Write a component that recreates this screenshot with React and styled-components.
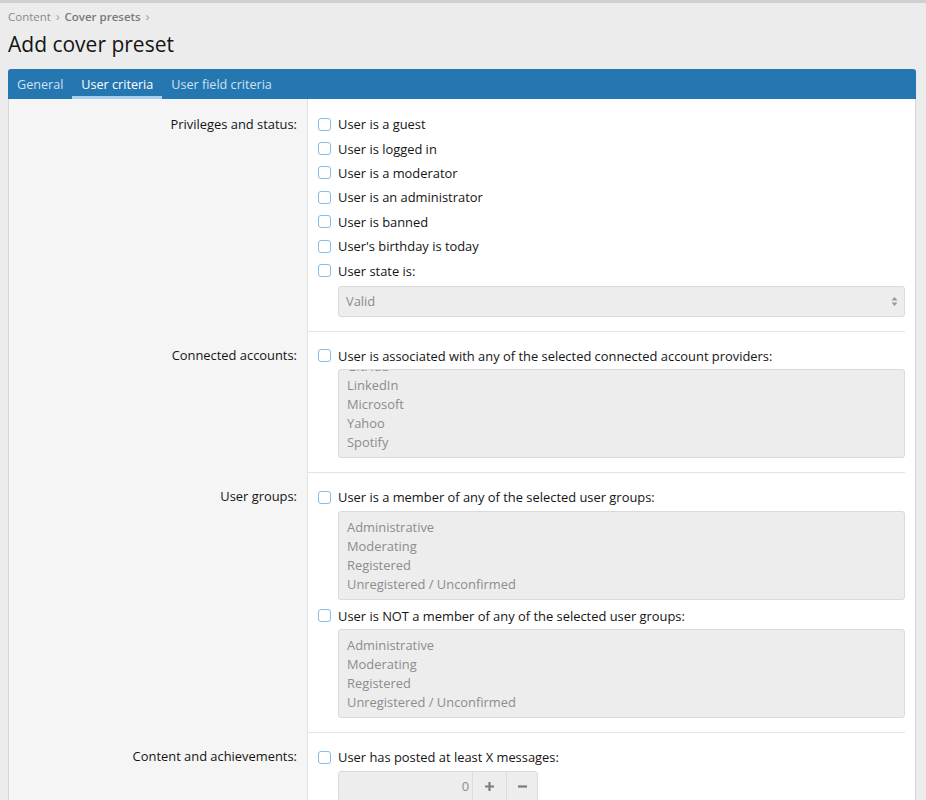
import React from 'react'
import styled, { createGlobalStyle } from 'styled-components'

const GlobalStyle = createGlobalStyle`
  html, body {
    margin: 0;
    padding: 0;
    background: #ececec;
    font-family: "Open Sans", "Noto Sans", sans-serif;
    color: #141414;
  }
  * { box-sizing: border-box; }
`

const Page = styled.div`
  min-height: 800px;
  padding: 0 10px 0 8px;
  border-top: 3px solid #cfcfcf;
  overflow: hidden;
`

const Crumbs = styled.div`
  display: flex;
  align-items: center;
  gap: 5px;
  margin-top: 5px;
  height: 16px;
  font-size: 11.5px;
  color: #8a8a8a;
`

const Crumb = styled.span`
  font-weight: ${(props) => (props.strong ? 600 : 400)};
  color: ${(props) => (props.strong ? '#7a7a7a' : '#8a8a8a')};
`

const Chevron = styled.span`
  font-size: 12px;
  color: #9a9a9a;
`

const Title = styled.h1`
  margin: 6px 0 11px;
  font-size: 21px;
  line-height: 28px;
  font-weight: 400;
  color: #141414;
`

const Panel = styled.div`
  border: 1px solid #d6d6d6;
  border-top: none;
  border-radius: 3px 3px 0 0;
  background: #fff;
`

const TabBar = styled.div`
  display: flex;
  height: 30px;
  background: #2577b1;
  border-radius: 3px 3px 0 0;
  margin: 0 -1px;
`

const Tab = styled.div`
  display: flex;
  align-items: center;
  padding: 3px 9px 0;
  font-size: 12.6px;
  color: ${(props) => (props.active ? '#ffffff' : '#cfe2f2')};
  border-bottom: 3px solid ${(props) => (props.active ? '#a9d0ee' : 'transparent')};
`

const Row = styled.div`
  display: grid;
  grid-template-columns: 299px 1fr;
`

const Label = styled.div`
  background: #f5f5f5;
  border-right: 1px solid #e2e2e2;
  padding: ${(props) => (props.first ? '13px' : '12px')} 10px 0 0;
  text-align: right;
  font-size: 12.9px;
  line-height: 24.4px;
  color: #141414;
`

const Body = styled.div`
  margin-right: 10px;
  padding: ${(props) => (props.first ? '13px' : '12px')} 0 14px 10px;
  border-top: ${(props) => (props.first ? 'none' : '1px solid #e4e4e4')};
`

const Option = styled.label`
  display: flex;
  align-items: center;
  gap: 7px;
  height: 24.4px;
  font-size: 12.9px;
  color: #141414;
  margin-top: ${(props) => props.gap || 0}px;
`

const Box = styled.span`
  width: 13px;
  height: 13px;
  border: 1px solid #86bde8;
  border-radius: 3px;
  background: #fff;
  flex: none;
`

const Select = styled.div`
  display: flex;
  align-items: center;
  justify-content: space-between;
  margin: 3px 0 0 20px;
  height: 31px;
  padding: 0 6px 0 7px;
  background: #ededed;
  border: 1px solid #dadada;
  border-radius: 3px;
  font-size: 12.9px;
  color: #8c8c8c;
`

const ListBox = styled.div`
  margin: 1px 0 0 20px;
  height: 89px;
  padding: 0 8px;
  background: #ededed;
  border: 1px solid #dadada;
  border-radius: 3px;
  overflow: hidden;
`

const ListInner = styled.div`
  margin-top: ${(props) => props.offset}px;
`

const ListItem = styled.div`
  height: 19px;
  line-height: 19px;
  font-size: 12.9px;
  color: #8c8c8c;
`

const Spinner = styled.div`
  display: flex;
  margin: 2px 0 0 20px;
  width: 200px;
  height: 30px;
  background: #ededed;
  border: 1px solid #dadada;
  border-radius: 3px;
`

const SpinValue = styled.div`
  flex: 1;
  display: flex;
  align-items: center;
  justify-content: flex-end;
  padding-right: 3px;
  font-size: 12.9px;
  color: #8c8c8c;
`

const SpinButton = styled.div`
  display: flex;
  align-items: center;
  justify-content: center;
  width: ${(props) => props.w}px;
  border-left: 1px solid #dcdcdc;
  color: #7c7c7c;
`

const Arrows = () => (
  <svg width="7" height="11" viewBox="0 0 7 11">
    <path d="M3.5 1 L6.5 4.5 H0.5 Z M3.5 10 L6.5 6.5 H0.5 Z" fill="#9a9a9a" />
  </svg>
)

const Plus = () => (
  <svg width="11" height="11" viewBox="0 0 11 11">
    <path d="M5.5 1 V10 M1 5.5 H10" stroke="currentColor" strokeWidth="2.2" />
  </svg>
)

const Minus = () => (
  <svg width="11" height="11" viewBox="0 0 11 11">
    <path d="M1 5.5 H10" stroke="currentColor" strokeWidth="2.2" />
  </svg>
)

const Check = ({ children, gap }) => (
  <Option gap={gap}>
    <Box />
    {children}
  </Option>
)

const providers = ['GitHub', 'LinkedIn', 'Microsoft', 'Yahoo', 'Spotify']
const groups = ['Administrative', 'Moderating', 'Registered', 'Unregistered / Unconfirmed']

const App = () => {
  return (
    <>
      <GlobalStyle />
      <Page>
        <Crumbs>
          <Crumb>Content</Crumb>
          <Chevron>›</Chevron>
          <Crumb strong>Cover presets</Crumb>
          <Chevron>›</Chevron>
        </Crumbs>
        <Title>Add cover preset</Title>
        <Panel>
          <TabBar>
            <Tab>General</Tab>
            <Tab active>User criteria</Tab>
            <Tab>User field criteria</Tab>
          </TabBar>

          <Row>
            <Label first>Privileges and status:</Label>
            <Body first>
              <Check>User is a guest</Check>
              <Check>User is logged in</Check>
              <Check>User is a moderator</Check>
              <Check>User is an administrator</Check>
              <Check>User is banned</Check>
              <Check>User's birthday is today</Check>
              <Check>User state is:</Check>
              <Select>
                Valid
                <Arrows />
              </Select>
            </Body>
          </Row>

          <Row>
            <Label>Connected accounts:</Label>
            <Body>
              <Check>User is associated with any of the selected connected account providers:</Check>
              <ListBox>
                <ListInner offset={-13}>
                  {providers.map((p) => (
                    <ListItem key={p}>{p}</ListItem>
                  ))}
                </ListInner>
              </ListBox>
            </Body>
          </Row>

          <Row>
            <Label>User groups:</Label>
            <Body>
              <Check>User is a member of any of the selected user groups:</Check>
              <ListBox>
                <ListInner offset={6}>
                  {groups.map((g) => (
                    <ListItem key={g}>{g}</ListItem>
                  ))}
                </ListInner>
              </ListBox>
              <Check gap={4}>User is NOT a member of any of the selected user groups:</Check>
              <ListBox>
                <ListInner offset={6}>
                  {groups.map((g) => (
                    <ListItem key={g}>{g}</ListItem>
                  ))}
                </ListInner>
              </ListBox>
            </Body>
          </Row>

          <Row>
            <Label>Content and achievements:</Label>
            <Body>
              <Check>User has posted at least X messages:</Check>
              <Spinner>
                <SpinValue>0</SpinValue>
                <SpinButton w={34}><Plus /></SpinButton>
                <SpinButton w={31}><Minus /></SpinButton>
              </Spinner>
            </Body>
          </Row>
        </Panel>
      </Page>
    </>
  )
}

export default App
